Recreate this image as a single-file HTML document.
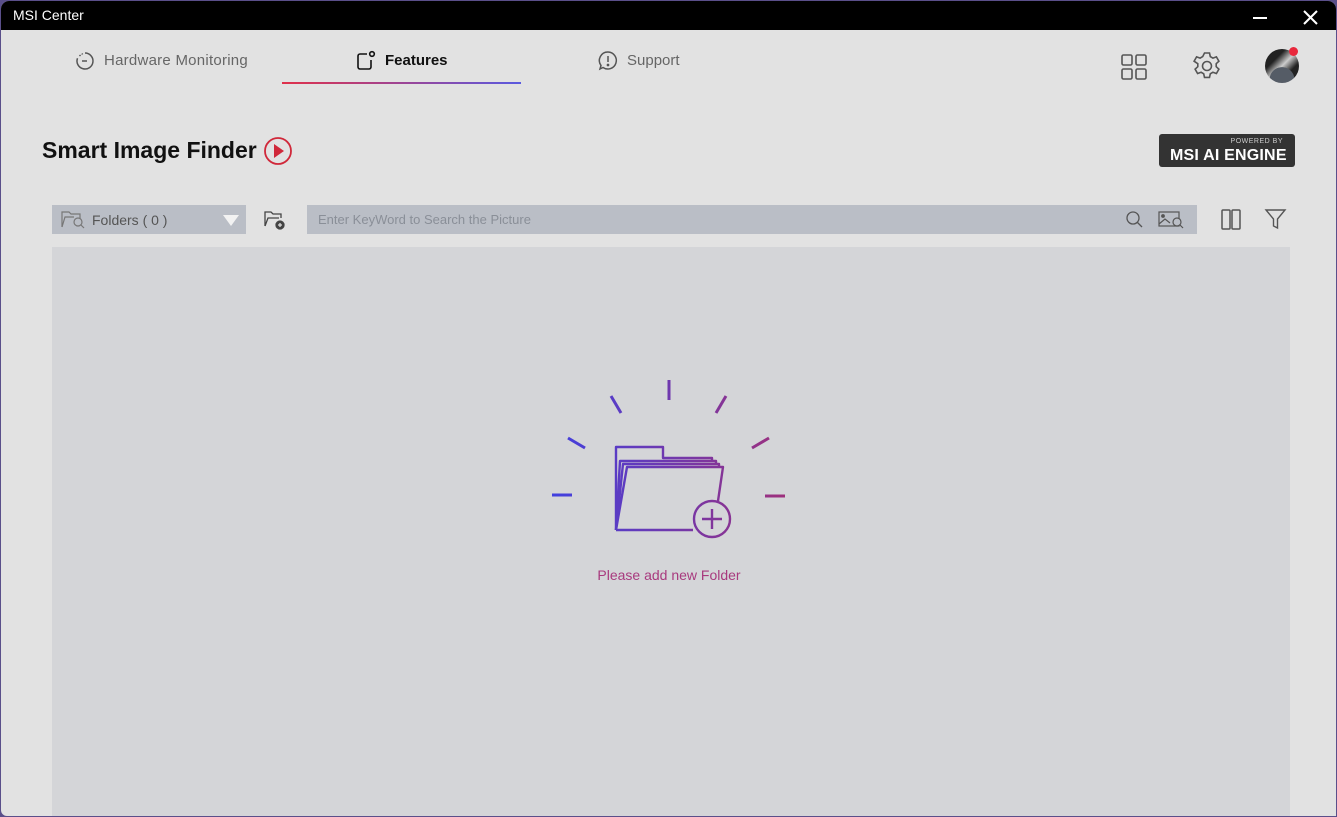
<!DOCTYPE html>
<html><head><meta charset="utf-8"><style>
*{margin:0;padding:0;box-sizing:border-box}
html,body{width:1337px;height:817px;overflow:hidden;background:#5a4f8a}
body{font-family:"Liberation Sans",sans-serif}
.win{position:absolute;left:1px;top:1px;width:1335px;height:815px;background:#e2e2e2;border-radius:8px 8px 0 6px;overflow:hidden}
.title{position:absolute;left:0;top:0;width:100%;height:29px;background:#000;color:#fff;font-size:14px;line-height:29px;padding-left:12px}
.tab{position:absolute;top:50px;font-size:15px;color:#666;line-height:20px}
.content{position:absolute;left:51px;top:246px;width:1238px;height:580px;background:#d4d5d8}
</style></head><body>
<div class="win">
<div class="title">MSI Center</div>
<svg style="position:absolute;left:1250px;top:8px" width="80" height="16"><line x1="2" y1="9" x2="16" y2="9" stroke="#fff" stroke-width="2"/><line x1="53" y1="2" x2="66" y2="15" stroke="#fff" stroke-width="2"/><line x1="66" y1="2" x2="53" y2="15" stroke="#fff" stroke-width="2"/></svg>

<svg style="position:absolute;left:73px;top:49px" width="22" height="22" fill="none" stroke="#555" stroke-width="1.5"><path d="M11 3a8 8 0 1 1-7.5 5.2"/><path d="M5.5 5l1 1M8 3.5l.5 1"/><line x1="8" y1="11" x2="13" y2="11"/></svg>
<div class="tab" style="left:103px;letter-spacing:.25px">Hardware Monitoring</div>
<svg style="position:absolute;left:354px;top:49px" width="22" height="22" fill="none" stroke="#111" stroke-width="1.6"><path d="M12 4H5a2 2 0 0 0-2 2v11a2 2 0 0 0 2 2h9a2 2 0 0 0 2-2v-7"/><circle cx="17" cy="4" r="2.3"/></svg>
<div class="tab" style="left:384px;color:#111;font-weight:bold">Features</div>
<div style="position:absolute;left:281px;top:81px;width:239px;height:2px;background:linear-gradient(90deg,#e0304a,#5a5ae0)"></div>
<svg style="position:absolute;left:596px;top:49px" width="22" height="22" fill="none" stroke="#555" stroke-width="1.5"><path d="M11 2a8.5 8.5 0 1 1-5 15.5L3 19l1-3.5A8.5 8.5 0 0 1 11 2z"/><line x1="11" y1="6" x2="11" y2="12"/><circle cx="11" cy="15" r=".6" fill="#555"/></svg>
<div class="tab" style="left:626px">Support</div>

<svg style="position:absolute;left:1119px;top:52px" width="28" height="28" fill="none" stroke="#555" stroke-width="1.6"><rect x="2" y="2" width="10" height="10" rx="1.5"/><rect x="16" y="2" width="10" height="10" rx="1.5"/><rect x="2" y="16" width="10" height="10" rx="1.5"/><rect x="16" y="16" width="10" height="10" rx="1.5"/></svg>
<svg style="position:absolute;left:1191px;top:50px" width="30" height="30" fill="none" stroke="#555" stroke-width="1.6"><path d="M12.5 2h5l.8 3.6 2.6 1.5 3.5-1.2 2.5 4.3-2.7 2.5v3l2.7 2.5-2.5 4.3-3.5-1.2-2.6 1.5-.8 3.6h-5l-.8-3.6-2.6-1.5-3.5 1.2-2.5-4.3 2.7-2.5v-3L2.1 10.2l2.5-4.3 3.5 1.2 2.6-1.5z"/><circle cx="15" cy="15" r="4.5"/></svg>
<div style="position:absolute;left:1264px;top:48px;width:34px;height:34px;border-radius:50%;background:radial-gradient(circle at 50% 90%,#555c66 35%,transparent 36%),linear-gradient(135deg,#222 30%,#ccc 50%,#222 70%)"></div>
<div style="position:absolute;left:1288px;top:46px;width:9px;height:9px;border-radius:50%;background:#e8283c"></div>

<div style="position:absolute;left:41px;top:136px;font-size:23px;font-weight:bold;color:#111">Smart Image Finder</div>
<svg style="position:absolute;left:262px;top:135px" width="30" height="30"><circle cx="15" cy="15" r="13" fill="none" stroke="#d0283a" stroke-width="1.8"/><path d="M11 8l10 7-10 7z" fill="#d0283a"/></svg>

<div style="position:absolute;left:1158px;top:133px;width:136px;height:33px;background:#333;border-radius:3px;color:#fff">
<div style="position:absolute;right:12px;top:4px;font-size:7px;letter-spacing:.5px;color:#ccc">POWERED BY</div>
<div style="position:absolute;left:11px;top:13px;font-size:16px;font-weight:bold;letter-spacing:.2px">MSI AI ENGINE</div></div>

<div style="position:absolute;left:51px;top:204px;width:194px;height:29px;background:#babec6">
<svg style="position:absolute;left:9px;top:5px" width="26" height="20" fill="none" stroke="#777" stroke-width="1.2"><path d="M1 17V2h7l2 2h9v5"/><path d="M1 17l3-10h9"/><circle cx="17" cy="12" r="4"/><line x1="20" y1="15" x2="23" y2="18"/></svg>
<div style="position:absolute;left:40px;top:7px;font-size:14px;color:#555">Folders ( 0 )</div>
<div style="position:absolute;left:171px;top:10px;border-left:8px solid transparent;border-right:8px solid transparent;border-top:11px solid #f2f2f2"></div></div>
<svg style="position:absolute;left:262px;top:208px" width="24" height="22" fill="none" stroke="#444" stroke-width="1.3"><path d="M2 17V3h6l2 2h8v4"/><path d="M2 17l3-8h11"/><circle cx="17" cy="16" r="4" fill="#444"/><path d="M15 16h4M17 14v4" stroke="#ddd"/></svg>
<div style="position:absolute;left:306px;top:204px;width:890px;height:29px;background:#babec6">
<div style="position:absolute;left:11px;top:7px;font-size:13px;color:#8a8f98">Enter KeyWord to Search the Picture</div>
<svg style="position:absolute;left:818px;top:5px" width="20" height="20" fill="none" stroke="#555" stroke-width="1.3"><circle cx="8" cy="8" r="6"/><line x1="12.5" y1="12.5" x2="17" y2="17"/></svg>
<svg style="position:absolute;left:851px;top:5px" width="28" height="20" fill="none" stroke="#555" stroke-width="1.2"><rect x="1" y="2" width="20" height="14"/><path d="M1 14l6-5 5 4"/><circle cx="5" cy="6" r="1.3" fill="#555"/><circle cx="19" cy="12" r="4" fill="#babec6"/><line x1="22" y1="15" x2="25" y2="18"/></svg></div>
<svg style="position:absolute;left:1219px;top:207px" width="24" height="24" fill="none" stroke="#555" stroke-width="1.5"><rect x="2" y="2" width="8" height="19" rx="1"/><rect x="12" y="2" width="8" height="19" rx="1"/></svg>
<svg style="position:absolute;left:1263px;top:207px" width="24" height="24" fill="none" stroke="#555" stroke-width="1.4"><path d="M2 2h19l-7.5 9v9l-4-2v-7z"/></svg>

<div class="content"></div>
<svg style="position:absolute;left:0;top:0" width="1337" height="817">
<defs><linearGradient id="g" x1="550" y1="0" x2="790" y2="0" gradientUnits="userSpaceOnUse"><stop offset="0" stop-color="#4040e0"/><stop offset="1" stop-color="#a0307a"/></linearGradient></defs>
<g stroke="url(#g)" stroke-width="3" fill="none">
<line x1="551" y1="494" x2="571" y2="494"/><line x1="567" y1="437" x2="584" y2="447"/><line x1="610" y1="395" x2="620" y2="412"/><line x1="668" y1="379" x2="668" y2="399"/><line x1="725" y1="395" x2="715" y2="412"/><line x1="768" y1="437" x2="751" y2="447"/><line x1="764" y1="495" x2="784" y2="495"/>
</g>
<g stroke="url(#g)" stroke-width="2.4" fill="none" stroke-linejoin="round">
<path d="M615 529V446h47v11h49v3"/>
<path d="M615 529L619 460H715v3"/>
<path d="M615 529L622 463H718v3"/>
<path d="M615 529L626 466H722L717 500"/>
<path d="M615 529H692"/>
<circle cx="711" cy="518" r="18"/><line x1="711" y1="508" x2="711" y2="528"/><line x1="701" y1="518" x2="721" y2="518"/>
</g>
<text x="668" y="579" text-anchor="middle" font-family="Liberation Sans" font-size="14" fill="#a83a7e">Please add new Folder</text>
</svg>
</div>
</body></html>
